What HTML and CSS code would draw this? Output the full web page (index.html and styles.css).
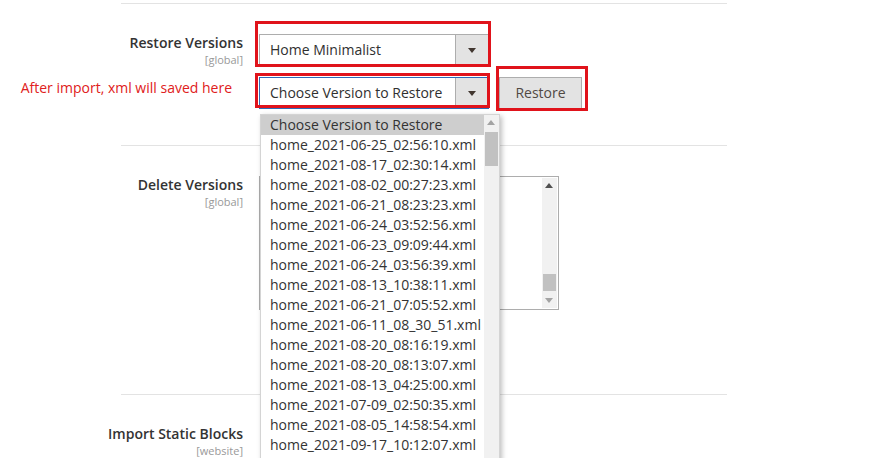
FILE: index.html
```html
<!DOCTYPE html>
<html>
<head>
<meta charset="utf-8">
<link rel="stylesheet" href="styles.css">
</head>
<body>
<div class="page">
  <div class="sep"></div>

  <div class="field field-restore">
    <div class="label">
      <span class="name">Restore Versions</span>
      <span class="scope">[global]</span>
    </div>
    <div class="control">
      <div class="select"><span class="value">Home Minimalist</span><span class="arrow"></span></div>
    </div>
  </div>

  <div class="field field-choose">
    <div class="label note">After import, xml will saved here</div>
    <div class="control row">
      <div class="select focused"><span class="value">Choose Version to Restore</span><span class="arrow"></span></div>
      <button class="btn">Restore</button>
    </div>
  </div>

  <div class="sep sep2"></div>

  <div class="field field-delete">
    <div class="label">
      <span class="name">Delete Versions</span>
      <span class="scope">[global]</span>
    </div>
    <div class="control">
      <div class="textarea">
        <div class="ta-scroll">
          <span class="tri-up dark"></span>
          <span class="ta-thumb"></span>
          <span class="tri-down light"></span>
        </div>
      </div>
    </div>
  </div>

  <div class="sep sep3"></div>

  <div class="field field-import">
    <div class="label">
      <span class="name">Import Static Blocks</span>
      <span class="scope">[website]</span>
    </div>
    <div class="control"></div>
  </div>
</div>

<div class="dropdown">
  <ul class="options">
    <li class="selected">Choose Version to Restore</li>
    <li>home_2021-06-25_02:56:10.xml</li>
    <li>home_2021-08-17_02:30:14.xml</li>
    <li>home_2021-08-02_00:27:23.xml</li>
    <li>home_2021-06-21_08:23:23.xml</li>
    <li>home_2021-06-24_03:52:56.xml</li>
    <li>home_2021-06-23_09:09:44.xml</li>
    <li>home_2021-06-24_03:56:39.xml</li>
    <li>home_2021-08-13_10:38:11.xml</li>
    <li>home_2021-06-21_07:05:52.xml</li>
    <li>home_2021-06-11_08_30_51.xml</li>
    <li>home_2021-08-20_08:16:19.xml</li>
    <li>home_2021-08-20_08:13:07.xml</li>
    <li>home_2021-08-13_04:25:00.xml</li>
    <li>home_2021-07-09_02:50:35.xml</li>
    <li>home_2021-08-05_14:58:54.xml</li>
    <li>home_2021-09-17_10:12:07.xml</li>
  </ul>
  <div class="dd-scroll">
    <span class="tri-up light"></span>
    <span class="dd-thumb"></span>
  </div>
</div>

<div class="mark mark1"></div>
<div class="mark mark2"></div>
<div class="mark mark3"></div>
</body>
</html>
```

FILE: styles.css
```css
html, body {
  margin: 0;
  padding: 0;
  background: #fff;
  overflow: hidden;
}
body {
  font-family: "Open Sans", "DejaVu Sans", sans-serif;
  color: #303030;
  width: 877px;
  height: 458px;
  position: relative;
}
.page {
  padding-top: 3px;
}
.sep {
  height: 1px;
  background: #e3e3e3;
  margin-left: 121px;
  width: 606px;
}
.field {
  display: grid;
  grid-template-columns: 243px 1fr;
  column-gap: 16px;
}
.label {
  display: flex;
  flex-direction: column;
  align-items: flex-end;
  text-align: right;
}
.name {
  font-size: 14px;
  font-weight: 600;
  line-height: 16px;
  color: #333;
}
.scope {
  font-size: 11px;
  line-height: 12px;
  margin-top: 3px;
  color: #999;
}
.field-restore {
  margin-top: 30px;
}
.field-restore .label {
  padding-top: 1px;
}
.field-choose {
  margin-top: 11px;
}
.note {
  font-size: 14px;
  color: #e02020;
  padding-top: 2px;
  padding-right: 11px;
  line-height: 18px;
  font-weight: 400;
}
.row {
  display: flex;
  gap: 10px;
  align-items: flex-start;
}
.select {
  box-sizing: border-box;
  width: 230px;
  height: 32px;
  border: 1px solid #adadad;
  display: flex;
  align-items: stretch;
  background: #fff;
}
.select.focused {
  border-color: #2d6bb8;
}
.value {
  flex: 1;
  font-size: 14px;
  line-height: 30px;
  padding-left: 10px;
  color: #303030;
}
.arrow {
  width: 32px;
  background: #e3e3e3;
  border-left: 1px solid #adadad;
  position: relative;
}
.arrow::after {
  content: "";
  position: absolute;
  left: 12px;
  top: 13px;
  border-left: 4px solid transparent;
  border-right: 4px solid transparent;
  border-top: 5px solid #41362f;
}
.btn {
  box-sizing: border-box;
  width: 83px;
  height: 32px;
  background: #e3e3e3;
  border: 1px solid #adadad;
  font-family: "Open Sans", "DejaVu Sans", sans-serif;
  font-size: 14px;
  color: #514943;
  padding: 0 0 2px 0;
}
.sep2 {
  margin-top: 36px;
}
.field-delete {
  margin-top: 31px;
}
.field-delete .label {
  padding-top: 0;
}
.textarea {
  box-sizing: border-box;
  width: 300px;
  height: 134px;
  border: 1px solid #adadad;
  display: flex;
  justify-content: flex-end;
  padding: 1px;
  margin-top: -1px;
}
.ta-scroll {
  width: 15px;
  background: #f1f1f1;
  position: relative;
}
.ta-thumb {
  position: absolute;
  left: 1px;
  right: 1px;
  top: 96px;
  height: 17px;
  background: #c1c1c1;
}
.tri-up, .tri-down {
  position: absolute;
  left: 3px;
  width: 0;
  height: 0;
  border-left: 4.5px solid transparent;
  border-right: 4.5px solid transparent;
}
.tri-up {
  top: 5px;
  border-bottom: 5px solid #505050;
}
.tri-down {
  bottom: 5px;
  border-top: 5px solid #a3a3a3;
}
.tri-up.light {
  border-bottom-color: #a3a3a3;
}
.sep3 {
  margin-top: 84px;
}
.field-import {
  margin-top: 31px;
}
.field-import .label {
  padding-top: 0;
}
.dropdown {
  position: absolute;
  left: 260px;
  top: 114px;
  width: 240px;
  height: 360px;
  background: #fff;
  border: 1px solid #d4d4d4;
  box-sizing: border-box;
  box-shadow: 2px 2px 5px rgba(0, 0, 0, 0.25);
  display: flex;
}
.options {
  list-style: none;
  margin: 0;
  padding: 0;
  flex: 1;
}
.options li {
  height: 20px;
  line-height: 20px;
  font-size: 14px;
  padding-left: 9px;
  color: #333;
  white-space: nowrap;
}
.options li.selected {
  background: #cecece;
}
.dd-scroll {
  width: 15px;
  background: #f1f1f1;
  position: relative;
}
.dd-thumb {
  position: absolute;
  left: 1px;
  right: 1px;
  top: 17px;
  height: 34px;
  background: #c1c1c1;
}
.mark {
  position: absolute;
  border: 3px solid #e0131b;
  box-sizing: border-box;
}
.mark1 {
  left: 255px;
  top: 21px;
  width: 236px;
  height: 46px;
}
.mark2 {
  left: 255px;
  top: 73px;
  width: 235px;
  height: 35px;
}
.mark3 {
  left: 496px;
  top: 66px;
  width: 92px;
  height: 45px;
}
```
